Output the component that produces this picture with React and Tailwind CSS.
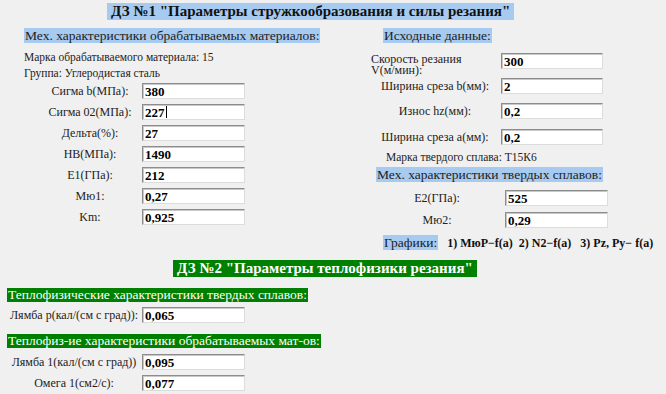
import React from 'react';

const Field = ({ value, caret, w = 'w-[103px]' }) => (
  <div className={`${w} h-[16px] bg-white border border-t-[#8c8c8c] border-l-[#8c8c8c] border-r-[#dcdcdc] border-b-[#dcdcdc] shadow-[inset_1px_1px_0_#c8c8c8] flex items-center pl-[2px] text-[13px] font-bold leading-none text-black`}>
    {value}
    {caret && <span className="inline-block w-[1px] h-[12px] bg-black ml-[1px]" />}
  </div>
);

const LeftRow = ({ label, value, caret }) => (
  <div className="flex items-center">
    <div className="w-[100px] ml-[16px] text-center text-[12px] leading-none text-[#222]">{label}</div>
    <div className="flex ml-[2px]">
      <Field value={value} caret={caret} />
    </div>
  </div>
);

const RightRow = ({ label, value, className = '' }) => (
  <div className={`flex items-center ${className}`}>
    <div className="w-[128px] text-center text-[12px] leading-none text-[#222]">{label}</div>
    <div className="flex ml-[2px]">
      <Field value={value} w="w-[102px]" />
    </div>
  </div>
);

const BottomRow = ({ label, value, className = '' }) => (
  <div className={`flex items-center ${className}`}>
    <div className="w-[132px] ml-[8px] text-center text-[12px] leading-none text-[#222]">{label}</div>
    <div className="flex ml-[2px]">
      <Field value={value} />
    </div>
  </div>
);

const Blue = ({ children, className = '' }) => (
  <span className={`bg-[#a6caf0] px-[1px] h-[15px] text-[13.5px] leading-[15px] text-[#222] ${className}`}>{children}</span>
);

const Green = ({ children }) => (
  <span className="bg-[#008000] px-[1px] h-[14px] text-[13.5px] leading-[14px] text-white">{children}</span>
);

export default function App() {
  return (
    <div className="w-[666px] h-[394px] bg-[#f0f0f0] overflow-hidden flex flex-col font-['Liberation_Serif','Times_New_Roman',serif]">
      <div className="flex pt-[3px] pl-[107px]">
        <span className="bg-[#a6caf0] px-[4px] h-[17px] text-[15px] leading-[17px] font-bold text-[#111]">
          ДЗ №1 "Параметры стружкообразования и силы резания"
        </span>
      </div>

      <div className="flex items-start">
        <div className="w-[371px] pl-[24px] flex flex-col">
          <div className="flex mt-[8px]">
            <Blue>Мех. характеристики обрабатываемых материалов:</Blue>
          </div>
          <div className="mt-[8px] text-[11.5px] leading-[12px] text-[#222]">Марка обрабатываемого материала: 15</div>
          <div className="mt-[4px] text-[11.5px] leading-[12px] text-[#222]">Группа: Углеродистая сталь</div>
          <div className="mt-[4px] flex flex-col gap-[5px]">
            <LeftRow label="Сигма b(МПа):" value="380" />
            <LeftRow label="Сигма 02(МПа):" value="227" caret />
            <LeftRow label="Дельта(%):" value="27" />
            <LeftRow label="HB(МПа):" value="1490" />
            <LeftRow label="E1(ГПа):" value="212" />
            <LeftRow label="Мю1:" value="0,27" />
            <LeftRow label="Km:" value="0,925" />
          </div>
        </div>

        <div className="flex-1 flex flex-col">
          <div className="flex mt-[8px] pl-[12px]">
            <Blue>Исходные данные:</Blue>
          </div>
          <div className="flex items-start mt-[10px]">
            <div className="w-[128px] mt-[1px] pr-[30px] text-[12px] leading-[11px] text-[#222]">Скорость резания V(м/мин):</div>
            <div className="flex ml-[2px]">
              <Field value="300" w="w-[102px]" />
            </div>
          </div>
          <RightRow label="Ширина среза b(мм):" value="2" className="mt-[2px]" />
          <RightRow label="Износ hz(мм):" value="0,2" className="mt-[9px]" />
          <RightRow label="Ширина среза а(мм):" value="0,2" className="mt-[10px]" />
          <div className="mt-[6px] pl-[15px] text-[11.5px] leading-[12px] text-[#222]">Марка твердого сплава: Т15К6</div>
          <div className="flex mt-[4px] pl-[5px]">
            <Blue>Мех. характеристики твердых сплавов:</Blue>
          </div>
          <div className="flex items-center mt-[8px]">
            <div className="w-[132px] text-center text-[12px] leading-none text-[#222]">E2(ГПа):</div>
            <div className="flex ml-[2px]"><Field value="525" /></div>
          </div>
          <div className="flex items-center mt-[6px]">
            <div className="w-[132px] text-center text-[12px] leading-none text-[#222]">Мю2:</div>
            <div className="flex ml-[2px]"><Field value="0,29" /></div>
          </div>
          <div className="mt-[7px] pl-[12px] flex items-center">
            <Blue>Графики:</Blue>
            <span className="ml-[9px] text-[12px] leading-[14px] font-bold text-[#111]">1) МюР−f(а)</span>
            <span className="ml-[6px] text-[12px] leading-[14px] font-bold text-[#111]">2) N2−f(а)</span>
            <span className="ml-[9px] text-[12px] leading-[14px] font-bold text-[#111]">3) Pz, Py− f(а)</span>
          </div>
        </div>
      </div>

      <div className="flex mt-[10px] pl-[173px]">
        <span className="bg-[#008000] px-[4px] h-[17px] text-[15px] leading-[17px] font-bold text-white">
          ДЗ №2 "Параметры теплофизики резания"
        </span>
      </div>
      <div className="flex mt-[11px] pl-[7px]">
        <Green>Теплофизические характеристики твердых сплавов:</Green>
      </div>
      <BottomRow label="Лямба р(кал/(см с град)):" value="0,065" className="mt-[5px]" />
      <div className="flex mt-[11px] pl-[7px]">
        <Green>Теплофиз-ие характеристики обрабатываемых мат-ов:</Green>
      </div>
      <BottomRow label="Лямба 1(кал/(см с град))" value="0,095" className="mt-[6px]" />
      <BottomRow label="Омега 1(см2/с):" value="0,077" className="mt-[5px]" />
    </div>
  );
}
